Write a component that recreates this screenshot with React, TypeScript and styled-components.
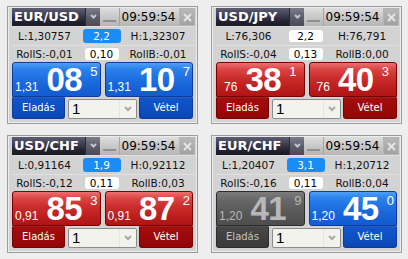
import React from 'react';
import styled, { createGlobalStyle } from 'styled-components';

type Tone = 'blue' | 'red' | 'gray';

interface Quote {
  pre: string;
  big: string;
  sup: string;
  tone: Tone;
}

interface Instrument {
  pair: string;
  time: string;
  low: string;
  spread: string;
  spreadHot: boolean;
  high: string;
  rollS: string;
  roll: string;
  rollB: string;
  sell: Quote;
  buy: Quote;
}

const instruments: Instrument[] = [
  {
    pair: 'EUR/USD', time: '09:59:54', low: 'L:1,30757', spread: '2,2', spreadHot: true, high: 'H:1,32307',
    rollS: 'RollS:-0,01', roll: '0,10', rollB: 'RollB:-0,01',
    sell: { pre: '1,31', big: '08', sup: '5', tone: 'blue' },
    buy: { pre: '1,31', big: '10', sup: '7', tone: 'blue' },
  },
  {
    pair: 'USD/JPY', time: '09:59:54', low: 'L:76,306', spread: '2,2', spreadHot: false, high: 'H:76,791',
    rollS: 'RollS:-0,04', roll: '0,13', rollB: 'RollB:0,00',
    sell: { pre: '76', big: '38', sup: '1', tone: 'red' },
    buy: { pre: '76', big: '40', sup: '3', tone: 'red' },
  },
  {
    pair: 'USD/CHF', time: '09:59:54', low: 'L:0,91164', spread: '1,9', spreadHot: true, high: 'H:0,92112',
    rollS: 'RollS:-0,12', roll: '0,11', rollB: 'RollB:0,03',
    sell: { pre: '0,91', big: '85', sup: '3', tone: 'red' },
    buy: { pre: '0,91', big: '87', sup: '2', tone: 'red' },
  },
  {
    pair: 'EUR/CHF', time: '09:59:54', low: 'L:1,20407', spread: '3,1', spreadHot: true, high: 'H:1,20712',
    rollS: 'RollS:-0,16', roll: '0,11', rollB: 'RollB:0,04',
    sell: { pre: '1,20', big: '41', sup: '9', tone: 'gray' },
    buy: { pre: '1,20', big: '45', sup: '0', tone: 'blue' },
  },
];

const tones: Record<Tone, { top: string; bottom: string; border: string; text: string }> = {
  blue: {
    top: 'linear-gradient(#4d9ff5 0%, #2c82ec 18%, #1f71e2 45%, #1662d6 75%, #135bd0 100%)',
    bottom: 'linear-gradient(#1157cb, #0a47b8)',
    border: '#0d3d98',
    text: '#ffffff',
  },
  red: {
    top: 'linear-gradient(#ec7070 0%, #dc4646 18%, #cb2c2c 45%, #bc1e1e 75%, #b01414 100%)',
    bottom: 'linear-gradient(#a40d0d, #930606)',
    border: '#780000',
    text: '#ffffff',
  },
  gray: {
    top: 'linear-gradient(#7c7c7c 0%, #676767 25%, #595959 60%, #4e4e4e 100%)',
    bottom: 'linear-gradient(#474747, #3a3a3a)',
    border: '#2c2c2c',
    text: '#b8b8b8',
  },
};

const GlobalStyle = createGlobalStyle`
  html, body {
    margin: 0;
    padding: 0;
    background: #eeeeee;
  }
  body {
    font-family: "DejaVu Sans", sans-serif;
  }
`;

const Board = styled.div`
  box-sizing: border-box;
  width: 408px;
  height: 259px;
  padding: 6px 0 0 7px;
  display: grid;
  grid-template-columns: 191px 191px;
  grid-auto-rows: 118px;
  column-gap: 13px;
  row-gap: 11px;
  background: #eeeeee;
`;

const Panel = styled.div`
  box-sizing: border-box;
  border: 1px solid #9c9c9c;
  box-shadow: inset 0 0 0 1px #ececec;
  background: #d3d3d3;
  padding: 1px 2px 4px 4px;
  display: flex;
  flex-direction: column;
`;

const Header = styled.div`
  display: flex;
  height: 18px;
`;

const PairName = styled.div`
  box-sizing: border-box;
  width: 73px;
  padding-left: 2px;
  background: linear-gradient(#5e5e74 0%, #3a3a4c 45%, #222230 75%, #1a1a26 100%);
  color: #ffffff;
  font: bold 13px/18px "DejaVu Sans", sans-serif;
  white-space: nowrap;
`;

const PairMenu = styled.div`
  box-sizing: border-box;
  width: 15px;
  border-left: 1px solid #2a2a36;
  background: linear-gradient(#7c7c8a, #5a5a68 55%, #4a4a58);
  display: flex;
  align-items: center;
  justify-content: center;
`;

const Tools = styled.div`
  flex: 1;
  display: flex;
  background: linear-gradient(#dedede, #c4c4c4 60%, #b6b6b6);
`;

const Minimize = styled.div`
  box-sizing: border-box;
  width: 20px;
  border-right: 1px solid #a4a4a4;
  display: flex;
  align-items: flex-end;
  justify-content: center;
  padding-bottom: 4px;

  &::after {
    content: '';
    display: block;
    width: 13px;
    height: 2px;
    background: #8e8e8e;
  }
`;

const Clock = styled.div`
  flex: 1;
  text-align: center;
  color: #000000;
  font: 12px/18px "DejaVu Sans", sans-serif;
  white-space: nowrap;
`;

const Close = styled.div`
  box-sizing: border-box;
  width: 16px;
  margin-left: 2px;
  border: 1px solid #b4b4b4;
  background: linear-gradient(#b8b8b8, #a2a2a2);
  display: flex;
  align-items: center;
  justify-content: center;
`;

const InfoRow = styled.div<{ $h: number }>`
  box-sizing: border-box;
  height: ${(p) => p.$h}px;
  display: grid;
  grid-template-columns: 65px 49px 64px;
  align-items: center;
  border-top: 1px solid #e0e0e0;
  color: #111111;
  font: 10.5px/12px "DejaVu Sans", sans-serif;
`;

const Cell = styled.div`
  text-align: center;
  white-space: nowrap;
`;

const Badge = styled.div<{ $hot: boolean; $h: number }>`
  margin: 0 auto;
  width: ${(p) => (p.$hot ? 38 : 34)}px;
  height: ${(p) => p.$h}px;
  line-height: ${(p) => p.$h}px;
  border-radius: 3px;
  background: ${(p) => (p.$hot ? '#1a8cf6' : '#ffffff')};
  color: ${(p) => (p.$hot ? '#ffffff' : '#000000')};
  text-align: center;
`;

const Trade = styled.div`
  display: flex;
  flex-direction: column;
  margin: 1px 2px 0 0;
`;

const QuoteRow = styled.div`
  display: flex;
  gap: 4px;
  height: 35px;
`;

const QuoteBox = styled.div<{ $tone: Tone; $side: 'sell' | 'buy' }>`
  box-sizing: border-box;
  flex: 1;
  display: flex;
  align-items: baseline;
  justify-content: center;
  border: 1px solid ${(p) => tones[p.$tone].border};
  border-radius: ${(p) => (p.$side === 'sell' ? '3px 3px 3px 0' : '3px 3px 0 3px')};
  background: ${(p) => tones[p.$tone].top};
  color: ${(p) => tones[p.$tone].text};
  font-family: "Liberation Sans", Arial, sans-serif;
`;

const Pre = styled.span`
  font-size: 12px;
  line-height: 12px;
  margin-right: 8px;
`;

const Big = styled.span`
  font-weight: bold;
  font-size: 33px;
  line-height: 33px;
  letter-spacing: -0.5px;
`;

const Sup = styled.span`
  align-self: flex-start;
  margin: 2px 0 0 8px;
  font-size: 13px;
  line-height: 13px;
`;

const ActionRow = styled.div`
  display: flex;
  height: 22px;
`;

const Action = styled.div<{ $tone: Tone; $side: 'sell' | 'buy' }>`
  box-sizing: border-box;
  ${(p) => (p.$side === 'sell' ? 'width: 53px;' : 'flex: 1; margin-left: 2px;')}
  display: flex;
  align-items: center;
  justify-content: center;
  border: 1px solid ${(p) => tones[p.$tone].border};
  border-top: 1px solid rgba(255, 255, 255, 0.12);
  border-radius: 0 0 3px 3px;
  background: ${(p) => tones[p.$tone].bottom};
  color: ${(p) => (p.$tone === 'gray' ? '#c4c4c4' : '#ffffff')};
  font: 10px/12px "DejaVu Sans", sans-serif;
`;

const Lot = styled.div`
  box-sizing: border-box;
  width: 69px;
  height: 20px;
  margin: 2px 0 0 3px;
  border: 1px solid #8c8c8c;
  border-radius: 2px;
  background: #f3f3ee;
  display: flex;
  align-items: center;
`;

const LotValue = styled.div`
  flex: 1;
  padding-left: 3px;
  color: #000000;
  font: 15px/18px "Liberation Sans", Arial, sans-serif;
  border-right: 1px solid #e6e6e0;
`;

const LotArrow = styled.div`
  width: 16px;
  display: flex;
  align-items: center;
  justify-content: center;
`;

const Chevron: React.FC<{ color: string; w?: number }> = ({ color, w = 8 }) => (
  <svg width={w} height={w / 2 + 2} viewBox={`0 0 ${w} ${w / 2 + 2}`}>
    <polyline points={`1,1 ${w / 2},${w / 2} ${w - 1},1`} fill="none" stroke={color} strokeWidth="2" />
  </svg>
);

const CloseIcon: React.FC = () => (
  <svg width="9" height="9" viewBox="0 0 9 9">
    <path d="M1 1 L8 8 M8 1 L1 8" stroke="#e6e6e6" strokeWidth="2" />
  </svg>
);

const QuoteButton: React.FC<{ q: Quote; side: 'sell' | 'buy' }> = ({ q, side }) => (
  <QuoteBox $tone={q.tone} $side={side}>
    <Pre>{q.pre}</Pre>
    <Big>{q.big}</Big>
    <Sup>{q.sup}</Sup>
  </QuoteBox>
);

const TradePanel: React.FC<{ d: Instrument }> = ({ d }) => (
  <Panel>
    <Header>
      <PairName>{d.pair}</PairName>
      <PairMenu>
        <Chevron color="#c4c4d2" w={7} />
      </PairMenu>
      <Tools>
        <Minimize />
        <Clock>{d.time}</Clock>
        <Close>
          <CloseIcon />
        </Close>
      </Tools>
    </Header>
    <InfoRow $h={19}>
      <Cell>{d.low}</Cell>
      <Badge $hot={d.spreadHot} $h={d.spreadHot ? 14 : 12}>{d.spread}</Badge>
      <Cell>{d.high}</Cell>
    </InfoRow>
    <InfoRow $h={16}>
      <Cell>{d.rollS}</Cell>
      <Badge $hot={false} $h={12}>{d.roll}</Badge>
      <Cell>{d.rollB}</Cell>
    </InfoRow>
    <Trade>
      <QuoteRow>
        <QuoteButton q={d.sell} side="sell" />
        <QuoteButton q={d.buy} side="buy" />
      </QuoteRow>
      <ActionRow>
        <Action $tone={d.sell.tone} $side="sell">Eladás</Action>
        <Lot>
          <LotValue>1</LotValue>
          <LotArrow>
            <Chevron color="#a8a8a8" w={8} />
          </LotArrow>
        </Lot>
        <Action $tone={d.buy.tone} $side="buy">Vétel</Action>
      </ActionRow>
    </Trade>
  </Panel>
);

export default function App() {
  return (
    <>
      <GlobalStyle />
      <Board>
        {instruments.map((d) => (
          <TradePanel key={d.pair} d={d} />
        ))}
      </Board>
    </>
  );
}
